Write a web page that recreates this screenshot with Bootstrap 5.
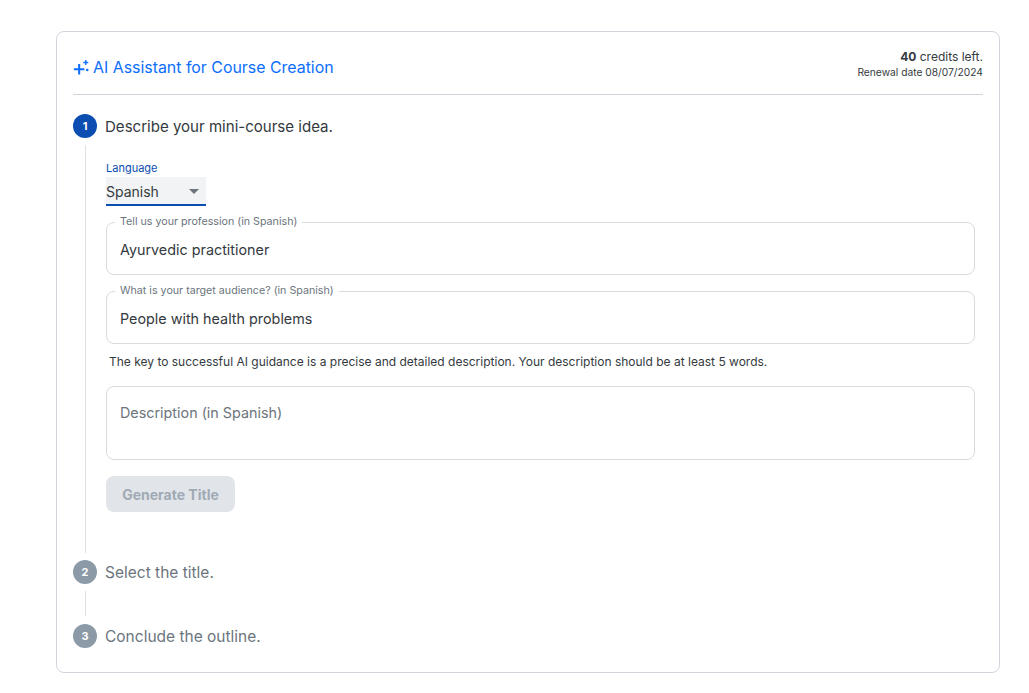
<!DOCTYPE html>
<html lang="en">

<head>
    <meta charset="UTF-8">
    <meta name="viewport" content="width=device-width, initial-scale=1.0">
    <title>AI Assistant</title>
    <link rel="stylesheet" href="https://cdn.jsdelivr.net/npm/bootstrap@5.3.2/dist/css/bootstrap.min.css">
    <style>
        body {
            background-color: #fff;
            color: #343a40;
            font-family: "Inter", "Liberation Sans", sans-serif;
            padding: 31px 29px 20px 56px;
        }

        .panel-box {
            border: 1px solid #ced4da;
            border-radius: 8px;
            padding: 16px;
            height: 642px;
        }

        .head-row {
            border-bottom: 1px solid #ced4da;
            height: 47px;
        }

        .head-title {
            color: #0d6efd;
            font-size: 15.9px;
            line-height: 20px;
            height: 20px;
            margin-top: 10px;
        }

        .credit-line {
            font-size: 12px;
            line-height: 16px;
            padding-top: 1px;
        }

        .renew-line {
            font-size: 10.25px;
            line-height: 15px;
        }

        .step-row {
            height: 24px;
        }

        .step-num {
            width: 24px;
            height: 24px;
            font-size: 11px;
            font-weight: 700;
            background-color: #8c9aa8;
        }

        .step-row.is-active .step-num {
            background-color: #0b4db0;
        }

        .step-text {
            font-size: 15.5px;
            color: #6c757d;
            margin-left: 8px;
            padding-top: 1px;
        }

        .step-row.is-active .step-text {
            color: #343a40;
            font-size: 15.05px;
            padding-top: 3px;
        }

        .step-one {
            margin-top: 19px;
        }

        .step-body {
            border-left: 1px solid #dee2e6;
            margin: 7px 0 7px 12px;
            padding: 16px 8px 0 20px;
            height: 408px;
        }

        .step-gap {
            border-left: 1px solid #dee2e6;
            height: 25px;
            margin: 7px 0 8px 12px;
        }

        .lang-label {
            color: #0b4db0;
            font-size: 11px;
            line-height: 14px;
            margin-bottom: 2px;
        }

        .lang-select {
            width: 100px;
            height: 29px;
            background-color: #f1f3f5;
            border-bottom: 2px solid #0b4db0;
            font-size: 14px;
            padding-top: 1px;
        }

        .lang-arrow {
            width: 0;
            height: 0;
            border-left: 5px solid transparent;
            border-right: 5px solid transparent;
            border-top: 5px solid #6c757d;
            margin-right: 7px;
        }

        .out-field {
            border: 1px solid #d8dce0;
            border-radius: 8px;
            height: 53px;
            padding: 3px 13px 0;
            font-size: 14.35px;
            margin-top: 16px;
        }

        .out-label {
            position: absolute;
            top: -8px;
            left: 8px;
            padding: 0 5px;
            background-color: #fff;
            color: #6c757d;
            font-size: 10.7px;
            line-height: 14px;
        }

        .help-line {
            font-size: 12px;
            line-height: 18px;
            margin: 9px 0 15px 3px;
        }

        .desc-box {
            border: 1px solid #d8dce0;
            border-radius: 8px;
            height: 74px;
            padding: 16px 13px;
            color: #6c757d;
            font-size: 14.35px;
            line-height: 20px;
        }

        .gen-btn {
            display: block;
            width: 129px;
            height: 36px;
            margin-top: 16px;
            padding: 1px 0 0;
            border: 0;
            background-color: #e1e5e9;
            color: #a0a9b4;
            border-radius: 8px;
            font-size: 14px;
            font-weight: 700;
        }
    </style>
</head>

<body>
    <div class="panel-box">
        <div class="head-row d-flex justify-content-between">
            <div class="head-title d-flex align-items-center gap-1">
                <svg width="16" height="16" viewBox="1 1 14 14" fill="#0d6efd">
                    <path d="M5.500 4.500h1.800v3.700h3.700V10H7.300v3.700H5.500V10H1.800V8.200h3.700z" />
                    <path d="M11.600 1h1.200v1.600h1.600v1.200h-1.600v1.600h-1.200V3.800H10V2.600h1.600z" />
                    <circle cx="13.500" cy="9.800" r="1.100" />
                </svg>
                <span>AI Assistant for Course Creation</span>
            </div>
            <div class="text-end">
                <div class="credit-line"><b>40</b> credits left.</div>
                <div class="renew-line">Renewal date 08/07/2024</div>
            </div>
        </div>

        <div class="step-row step-one is-active d-flex align-items-center">
            <div class="step-num rounded-circle text-white d-flex align-items-center justify-content-center">1</div>
            <div class="step-text">Describe your mini-course idea.</div>
        </div>
        <div class="step-body">
            <div class="lang-label">Language</div>
            <div class="lang-select d-flex align-items-center justify-content-between">
                <span>Spanish</span>
                <span class="lang-arrow"></span>
            </div>
            <div class="out-field position-relative d-flex align-items-center">
                <span class="out-label">Tell us your profession (in Spanish)</span>
                Ayurvedic practitioner
            </div>
            <div class="out-field position-relative d-flex align-items-center">
                <span class="out-label">What is your target audience? (in Spanish)</span>
                People with health problems
            </div>
            <div class="help-line">The key to successful AI guidance is a precise and detailed description. Your description should be at least 5 words.</div>
            <div class="desc-box">Description (in Spanish)</div>
            <button type="button" class="gen-btn" disabled>Generate Title</button>
        </div>

        <div class="step-row d-flex align-items-center">
            <div class="step-num rounded-circle text-white d-flex align-items-center justify-content-center">2</div>
            <div class="step-text">Select the title.</div>
        </div>
        <div class="step-gap"></div>
        <div class="step-row d-flex align-items-center">
            <div class="step-num rounded-circle text-white d-flex align-items-center justify-content-center">3</div>
            <div class="step-text">Conclude the outline.</div>
        </div>
    </div>

    <script src="https://cdn.jsdelivr.net/npm/bootstrap@5.3.2/dist/js/bootstrap.bundle.min.js"></script>
</body>

</html>
